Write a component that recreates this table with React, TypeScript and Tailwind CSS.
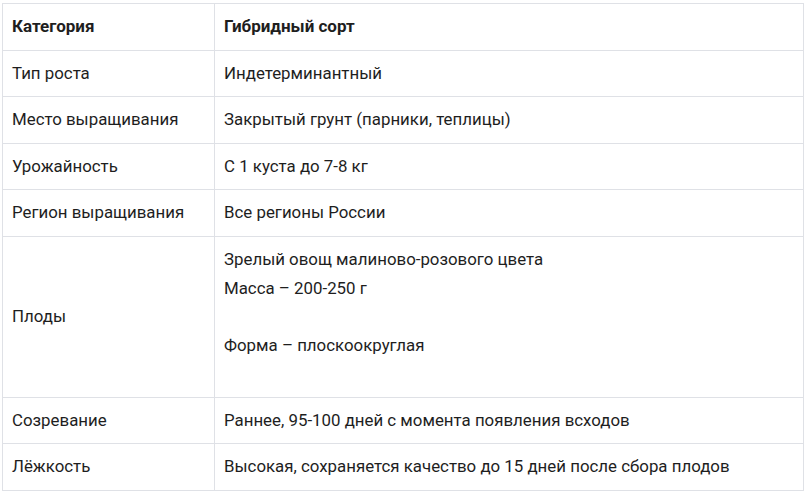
import React from 'react'

type Row = {
  label: string
  value: React.ReactNode
  h: string
}

const rows: Row[] = [
  { label: 'Тип роста', value: 'Индетерминантный', h: 'h-[46px]' },
  { label: 'Место выращивания', value: 'Закрытый грунт (парники, теплицы)', h: 'h-[47px]' },
  { label: 'Урожайность', value: 'С 1 куста до 7-8 кг', h: 'h-[46px]' },
  { label: 'Регион выращивания', value: 'Все регионы России', h: 'h-[47px]' },
  {
    label: 'Плоды',
    h: 'h-[161px]',
    value: (
      <div className="self-start pt-[8px]">
        <div className="leading-[29px]">Зрелый овощ малиново-розового цвета</div>
        <div className="leading-[29px]">Масса – 200-250 г</div>
        <div className="leading-[29px] mt-[28px]">Форма – плоскоокруглая</div>
      </div>
    ),
  },
  { label: 'Созревание', value: 'Раннее, 95-100 дней с момента появления всходов', h: 'h-[46px]' },
  { label: 'Лёжкость', value: 'Высокая, сохраняется качество до 15 дней после сбора плодов', h: 'h-[46px]' },
]

export default function App() {
  return (
    <div className="w-[806px] h-[493px] bg-white pt-[3px] pl-[2px] font-['Roboto',sans-serif] text-[16.85px] text-[#1e1e1e]">
      <div className="w-[802px] border border-[#dfe1e6]">
        <div className="flex h-[47px] border-b border-[#dfe1e6] font-bold text-[17px]">
          <div className="w-[212px] flex items-center pl-[9px] border-r border-[#dfe1e6]">Категория</div>
          <div className="flex-1 flex items-center pl-[9px]">Гибридный сорт</div>
        </div>
        {rows.map( ( row, i ) => (
          <div
            key={row.label}
            className={`flex ${row.h} ${i < rows.length - 1 ? 'border-b' : ''} border-[#dfe1e6]`}
          >
            <div className="w-[212px] flex items-center pl-[9px] border-r border-[#dfe1e6]">{row.label}</div>
            <div className="flex-1 flex items-center pl-[9px]">{row.value}</div>
          </div>
        ) )}
      </div>
    </div>
  )
}
